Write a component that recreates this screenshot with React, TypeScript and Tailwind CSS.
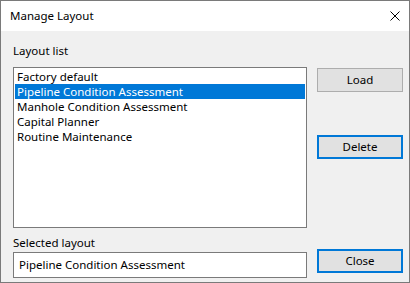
import React from "react";

const items = [
  "Factory default",
  "Pipeline Condition Assessment",
  "Manhole Condition Assessment",
  "Capital Planner",
  "Routine Maintenance",
];

export default function App() {
  const selected = 1;
  return (
    <div
      className="w-[410px] h-[283px] border border-[#7a7a7a] flex flex-col text-[11.5px] text-black bg-[#f0f0f0]"
      style={{ fontFamily: '"Noto Sans", "Open Sans", sans-serif' }}
    >
      <div className="h-[30px] bg-white flex items-center justify-between pl-[9px] pr-[9px] shrink-0">
        <span className="leading-[16px] text-[11.5px]">Manage Layout</span>
        <svg width="10" height="10" viewBox="0 0 10 10">
          <path d="M0.5 0.5 L9.5 9.5 M9.5 0.5 L0.5 9.5" stroke="#000" strokeWidth="1" fill="none" />
        </svg>
      </div>
      <div className="flex-1 flex pt-[12px] pl-[12px] pr-[5px] pb-[4px] gap-[10px]">
        <div className="w-[294px] flex flex-col">
          <div className="leading-[16px] h-[16px] mb-[8px]">Layout list</div>
          <div className="h-[161px] border border-[#7a7a7a] bg-white p-[1px]">
            {items.map((it, i) => (
              <div
                key={it}
                className={
                  "h-[15px] leading-[15px] pl-[2px] whitespace-nowrap overflow-hidden " +
                  (i === selected ? "bg-[#0078d7] text-white" : "")
                }
              >
                {it}
              </div>
            ))}
          </div>
          <div className="leading-[16px] h-[16px] mt-[7px] mb-[1px]">Selected layout</div>
          <div className="h-[26px] border border-[#7a7a7a] bg-white flex items-center pl-[5px]">
            Pipeline Condition Assessment
          </div>
        </div>
        <div className="w-[86px] flex flex-col">
          <div className="h-[25px]" />
          <button className="h-[24px] border border-[#adadad] bg-[#e1e1e1] leading-none">Load</button>
          <div className="h-[43px]" />
          <button className="h-[24px] border-2 border-[#0078d7] bg-[#e1e1e1] leading-none">Delete</button>
          <div className="flex-1" />
          <button className="h-[24px] border-2 border-[#0078d7] bg-[#e1e1e1] leading-none mb-[5px]">Close</button>
        </div>
      </div>
    </div>
  );
}
